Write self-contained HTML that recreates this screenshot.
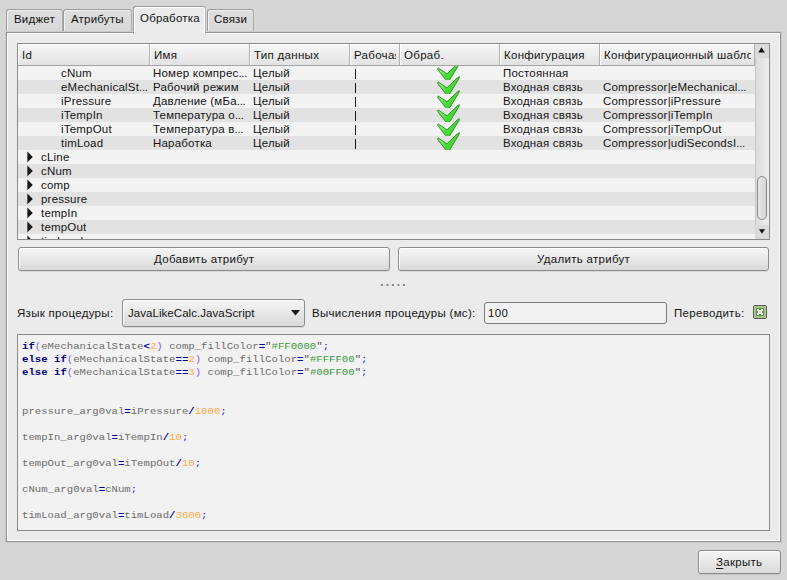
<!DOCTYPE html>
<html><head><meta charset="utf-8">
<style>
*{margin:0;padding:0;box-sizing:border-box}
html,body{width:787px;height:580px;overflow:hidden}
body{background:#d6d6d6;position:relative;font-family:"Liberation Sans",sans-serif;font-size:11.5px;letter-spacing:0.3px;color:#141414}
.a{position:absolute}
.t{position:absolute;white-space:pre;line-height:14px;height:14px;z-index:5}
.tab{position:absolute;top:9px;height:23px;border:1px solid #9c9c9c;border-right-color:#acacac;border-bottom:none;border-radius:3px 3px 0 0;background:linear-gradient(#dedede,#d8d8d8);box-shadow:inset 1px 1px 0 #f2f2f2}
.tabsel{position:absolute;top:6px;height:28px;border:1px solid #9c9c9c;border-bottom:none;border-radius:3px 3px 0 0;border-right-color:#b4b4b4;background:#ebebeb;box-shadow:inset 1px 1px 0 #fff,inset -1px 0 0 #fff;z-index:3}
.pane{position:absolute;left:6px;top:32px;width:775px;height:510px;border:1px solid #949494;background:#ebebeb;box-shadow:inset 1px 1px 0 #fff,inset -1px -1px 0 #fff,0 0 0 1px #cacaca;z-index:2}
.frame{position:absolute;left:17px;top:43px;width:753px;height:197px;border:1px solid #8a8a8a;background:#f3f3f3;overflow:hidden;z-index:4}
.hdr{position:absolute;top:0;z-index:3;height:22px;border-bottom:1px solid #a4a4a4;border-right:1px solid #b0b0b0;background:linear-gradient(#f7f7f7,#e2e2e2);box-shadow:inset 1px 1px 0 #fff}
.hdr span{position:absolute;left:4px;top:4px;white-space:pre;line-height:14px}
.row{position:absolute;left:0;width:737px;height:14px}
.r0{background:#f3f3f3}
.r1{background:#e2e2e2}
.row span{position:absolute;top:0;white-space:pre;line-height:14px;letter-spacing:0.2px}
.row span i{font-style:normal;letter-spacing:-0.3px}
.btn{position:absolute;border:1px solid #8c8c8c;border-radius:3px;background:linear-gradient(#f6f6f6,#d9d9d9);box-shadow:inset 1px 1px 0 #fff,0 1px 0 rgba(0,0,0,0.08)}
.code{position:absolute;left:22px;top:340.3px;transform:scaleY(0.9);transform-origin:0 0;font-family:"Liberation Mono",monospace;font-size:10.67px;line-height:14.444px;white-space:pre;color:#6c6c6c;letter-spacing:0}
.kw{color:#000080;font-weight:bold}
.op{color:#0000a0;font-weight:bold}
.pr{color:#8a5cff}
.nm{color:#ffad45}
.st{color:#3c9a3c}
.q{color:#505050}
.sc{color:#2020ff}
</style></head><body>
<div class="tab" style="left:6px;width:57px"></div>
<div class="t" style="left:14px;top:12px;letter-spacing:0.2px">Виджет</div>
<div class="tab" style="left:63px;width:69px"></div>
<div class="t" style="left:71px;top:12px;letter-spacing:0.2px">Атрибуты</div>
<div class="tabsel" style="left:133px;width:73px"></div>
<div class="t" style="left:140px;top:11px;letter-spacing:0.2px">Обработка</div>
<div class="tab" style="left:207px;width:47px"></div>
<div class="t" style="left:214px;top:12px;letter-spacing:0.2px">Связи</div>
<div class="pane"></div>
<div class="frame">
<div class="hdr" style="left:0px;width:132px;overflow:hidden"><span style="">Id</span></div>
<div class="hdr" style="left:132px;width:100px;overflow:hidden"><span style="">Имя</span></div>
<div class="hdr" style="left:232px;width:100px;overflow:hidden"><span style="">Тип данных</span></div>
<div class="hdr" style="left:332px;width:50px;overflow:hidden"><span style="width:42px;overflow:hidden;">Рабочая</span></div>
<div class="hdr" style="left:382px;width:100px;overflow:hidden"><span style="">Обраб.</span></div>
<div class="hdr" style="left:482px;width:100px;overflow:hidden"><span style="">Конфигурация</span></div>
<div class="hdr" style="left:582px;width:155px;overflow:hidden"><span style="width:147px;overflow:hidden;">Конфигурационный шаблон</span></div>
<div class="row r0" style="top:22px"><span style="left:43px;letter-spacing:0.2px">cNum</span><span style="left:135px">Номер компрес<i>...</i></span><span style="left:235px">Целый</span><div class="a" style="left:337px;top:3px;width:1px;height:10px;background:#1a1a2a"></div><svg class="a" style="left:419px;top:-4px" width="24" height="19" viewBox="0 -4 24 19"><defs><linearGradient id="g0" x1="0" y1="0" x2="1" y2="0.6"><stop offset="0" stop-color="#7fe86c"/><stop offset="0.35" stop-color="#78ea68"/><stop offset="0.6" stop-color="#48dc36"/><stop offset="1" stop-color="#3fd22e"/></linearGradient></defs><path d="M1.1 1.9 L10.0 7.8 L20.8 -2.6 L22.3 -3.3 L22.3 -2.1 L12.9 13.6 L10.8 14.9 L8.6 13.6 L0.7 3.4 Z" fill="url(#g0)" stroke="#2a8a22" stroke-width="0.9" stroke-linejoin="round"/></svg><span style="left:485px">Постоянная</span><span style="left:585px;letter-spacing:0.2px"></span></div>
<div class="row r1" style="top:36px"><span style="left:43px;letter-spacing:0.2px">eMechanicalSt<i>...</i></span><span style="left:135px">Рабочий режим</span><span style="left:235px">Целый</span><div class="a" style="left:337px;top:3px;width:1px;height:10px;background:#1a1a2a"></div><svg class="a" style="left:419px;top:-4px" width="24" height="19" viewBox="0 -4 24 19"><defs><linearGradient id="g1" x1="0" y1="0" x2="1" y2="0.6"><stop offset="0" stop-color="#7fe86c"/><stop offset="0.35" stop-color="#78ea68"/><stop offset="0.6" stop-color="#48dc36"/><stop offset="1" stop-color="#3fd22e"/></linearGradient></defs><path d="M1.1 1.9 L10.0 7.8 L20.8 -2.6 L22.3 -3.3 L22.3 -2.1 L12.9 13.6 L10.8 14.9 L8.6 13.6 L0.7 3.4 Z" fill="url(#g1)" stroke="#2a8a22" stroke-width="0.9" stroke-linejoin="round"/></svg><span style="left:485px">Входная связь</span><span style="left:585px;letter-spacing:0.2px">Compressor|eMechanical<i>...</i></span></div>
<div class="row r0" style="top:50px"><span style="left:43px;letter-spacing:0.2px">iPressure</span><span style="left:135px">Давление (мБа<i>...</i></span><span style="left:235px">Целый</span><div class="a" style="left:337px;top:3px;width:1px;height:10px;background:#1a1a2a"></div><svg class="a" style="left:419px;top:-4px" width="24" height="19" viewBox="0 -4 24 19"><defs><linearGradient id="g2" x1="0" y1="0" x2="1" y2="0.6"><stop offset="0" stop-color="#7fe86c"/><stop offset="0.35" stop-color="#78ea68"/><stop offset="0.6" stop-color="#48dc36"/><stop offset="1" stop-color="#3fd22e"/></linearGradient></defs><path d="M1.1 1.9 L10.0 7.8 L20.8 -2.6 L22.3 -3.3 L22.3 -2.1 L12.9 13.6 L10.8 14.9 L8.6 13.6 L0.7 3.4 Z" fill="url(#g2)" stroke="#2a8a22" stroke-width="0.9" stroke-linejoin="round"/></svg><span style="left:485px">Входная связь</span><span style="left:585px;letter-spacing:0.2px">Compressor|iPressure</span></div>
<div class="row r1" style="top:64px"><span style="left:43px;letter-spacing:0.2px">iTempIn</span><span style="left:135px">Температура о<i>...</i></span><span style="left:235px">Целый</span><div class="a" style="left:337px;top:3px;width:1px;height:10px;background:#1a1a2a"></div><svg class="a" style="left:419px;top:-4px" width="24" height="19" viewBox="0 -4 24 19"><defs><linearGradient id="g3" x1="0" y1="0" x2="1" y2="0.6"><stop offset="0" stop-color="#7fe86c"/><stop offset="0.35" stop-color="#78ea68"/><stop offset="0.6" stop-color="#48dc36"/><stop offset="1" stop-color="#3fd22e"/></linearGradient></defs><path d="M1.1 1.9 L10.0 7.8 L20.8 -2.6 L22.3 -3.3 L22.3 -2.1 L12.9 13.6 L10.8 14.9 L8.6 13.6 L0.7 3.4 Z" fill="url(#g3)" stroke="#2a8a22" stroke-width="0.9" stroke-linejoin="round"/></svg><span style="left:485px">Входная связь</span><span style="left:585px;letter-spacing:0.2px">Compressor|iTempIn</span></div>
<div class="row r0" style="top:78px"><span style="left:43px;letter-spacing:0.2px">iTempOut</span><span style="left:135px">Температура в<i>...</i></span><span style="left:235px">Целый</span><div class="a" style="left:337px;top:3px;width:1px;height:10px;background:#1a1a2a"></div><svg class="a" style="left:419px;top:-4px" width="24" height="19" viewBox="0 -4 24 19"><defs><linearGradient id="g4" x1="0" y1="0" x2="1" y2="0.6"><stop offset="0" stop-color="#7fe86c"/><stop offset="0.35" stop-color="#78ea68"/><stop offset="0.6" stop-color="#48dc36"/><stop offset="1" stop-color="#3fd22e"/></linearGradient></defs><path d="M1.1 1.9 L10.0 7.8 L20.8 -2.6 L22.3 -3.3 L22.3 -2.1 L12.9 13.6 L10.8 14.9 L8.6 13.6 L0.7 3.4 Z" fill="url(#g4)" stroke="#2a8a22" stroke-width="0.9" stroke-linejoin="round"/></svg><span style="left:485px">Входная связь</span><span style="left:585px;letter-spacing:0.2px">Compressor|iTempOut</span></div>
<div class="row r1" style="top:92px"><span style="left:43px;letter-spacing:0.2px">timLoad</span><span style="left:135px">Наработка</span><span style="left:235px">Целый</span><div class="a" style="left:337px;top:3px;width:1px;height:10px;background:#1a1a2a"></div><svg class="a" style="left:419px;top:-4px" width="24" height="19" viewBox="0 -4 24 19"><defs><linearGradient id="g5" x1="0" y1="0" x2="1" y2="0.6"><stop offset="0" stop-color="#7fe86c"/><stop offset="0.35" stop-color="#78ea68"/><stop offset="0.6" stop-color="#48dc36"/><stop offset="1" stop-color="#3fd22e"/></linearGradient></defs><path d="M1.1 1.9 L10.0 7.8 L20.8 -2.6 L22.3 -3.3 L22.3 -2.1 L12.9 13.6 L10.8 14.9 L8.6 13.6 L0.7 3.4 Z" fill="url(#g5)" stroke="#2a8a22" stroke-width="0.9" stroke-linejoin="round"/></svg><span style="left:485px">Входная связь</span><span style="left:585px;letter-spacing:0.2px">Compressor|udiSecondsI<i>...</i></span></div>
<div class="row r0" style="top:106px"><svg class="a" style="left:9px;top:1px" width="7" height="12"><path d="M0.4 0.6 L5.8 5.9 L0.4 11.2Z" fill="#161616"/></svg><span style="left:23px;letter-spacing:0.2px">cLine</span></div>
<div class="row r1" style="top:120px"><svg class="a" style="left:9px;top:1px" width="7" height="12"><path d="M0.4 0.6 L5.8 5.9 L0.4 11.2Z" fill="#161616"/></svg><span style="left:23px;letter-spacing:0.2px">cNum</span></div>
<div class="row r0" style="top:134px"><svg class="a" style="left:9px;top:1px" width="7" height="12"><path d="M0.4 0.6 L5.8 5.9 L0.4 11.2Z" fill="#161616"/></svg><span style="left:23px;letter-spacing:0.2px">comp</span></div>
<div class="row r1" style="top:148px"><svg class="a" style="left:9px;top:1px" width="7" height="12"><path d="M0.4 0.6 L5.8 5.9 L0.4 11.2Z" fill="#161616"/></svg><span style="left:23px;letter-spacing:0.2px">pressure</span></div>
<div class="row r0" style="top:162px"><svg class="a" style="left:9px;top:1px" width="7" height="12"><path d="M0.4 0.6 L5.8 5.9 L0.4 11.2Z" fill="#161616"/></svg><span style="left:23px;letter-spacing:0.2px">tempIn</span></div>
<div class="row r1" style="top:176px"><svg class="a" style="left:9px;top:1px" width="7" height="12"><path d="M0.4 0.6 L5.8 5.9 L0.4 11.2Z" fill="#161616"/></svg><span style="left:23px;letter-spacing:0.2px">tempOut</span></div>
<div class="row r0" style="top:190px"><svg class="a" style="left:9px;top:1px" width="7" height="12"><path d="M0.4 0.6 L5.8 5.9 L0.4 11.2Z" fill="#161616"/></svg><span style="left:23px;letter-spacing:0.2px">timLoad</span></div>
<div class="a" style="left:737px;top:0;width:14px;height:195px;background:linear-gradient(90deg,#dcdcdc,#eeeeee);border-left:1px solid #c8c8c8"></div>
<div class="a" style="left:737px;top:0;width:14px;height:14px;background:#dadada"></div>
<svg class="a" style="left:740px;top:3px" width="8" height="7"><path d="M0.3 5.6H6.8L3.55 0.3Z" fill="#111"/></svg>
<div class="a" style="left:737px;top:181px;width:14px;height:14px;background:#dadada"></div>
<svg class="a" style="left:740px;top:185px" width="8" height="6"><path d="M0.9 0.2H7.1L4 4.7Z" fill="#111"/></svg>
<div class="a" style="left:739px;top:132px;width:10px;height:44px;border:1px solid #8a8a8a;border-radius:5px;background:linear-gradient(90deg,#e6e6e6,#d6d6d6)"></div>
</div>
<div class="btn" style="left:18px;top:247px;width:372px;height:24px;z-index:4"></div>
<div class="t" style="left:154px;top:252px;">Добавить атрибут</div>
<div class="btn" style="left:398px;top:247px;width:371px;height:24px;z-index:4"></div>
<div class="t" style="left:537px;top:252px;">Удалить атрибут</div>
<svg class="a" style="left:376px;top:280px;z-index:4" width="36" height="10"><g fill="#8a8a8a"><rect x="4.9" y="4" width="2" height="2"/><rect x="10.4" y="4" width="2" height="2"/><rect x="15.9" y="4" width="2" height="2"/><rect x="21.4" y="4" width="2" height="2"/><rect x="26.9" y="4" width="2" height="2"/></g></svg>
<div class="t" style="left:17px;top:306px;">Язык процедуры:</div>
<div class="btn" style="left:122px;top:299px;width:183px;height:28px;z-index:4"></div>
<div class="t" style="left:128px;top:306px;letter-spacing:0.05px">JavaLikeCalc.JavaScript</div>
<svg class="a" style="left:291px;top:310px;z-index:5" width="9" height="6"><path d="M0 0H9L4.5 5.5Z" fill="#1a1a1a"/></svg>
<div class="t" style="left:312px;top:306px;">Вычисления процедуры (мс):</div>
<div class="a" style="left:484px;top:302px;width:183px;height:22px;border:1px solid #7c7c7c;border-radius:3px;background:#f2f2f2;z-index:4"></div>
<div class="t" style="left:488px;top:306px;">100</div>
<div class="t" style="left:674px;top:306px;">Переводить:</div>
<div class="a" style="left:753px;top:305px;width:14px;height:14px;border:1px solid #5a5a5a;border-radius:2px;background:#a6c98a;z-index:5"></div>
<svg class="a" style="left:756px;top:308px;z-index:6" width="8" height="8"><rect width="8" height="8" fill="#5a8a45"/><path d="M1 1h2v2h-2zM5 1h2v2h-2zM1 5h2v2h-2zM5 5h2v2h-2zM2 2h4v4h-4z" fill="#fff"/><rect x="3" y="3" width="2" height="2" fill="#ececec"/></svg>
<div class="a" style="left:17px;top:334px;width:753px;height:197px;border:1px solid #8a8a8a;background:#f2f2f2;z-index:4"></div>
<div class="code" style="z-index:5"><span class="kw">if</span><span class="pr">(</span>eMechanicalState<span class="op">&lt;</span><span class="nm">2</span><span class="pr">)</span> comp_fillColor<span class="op">=</span><span class="q">"</span><span class="st">#FF0000</span><span class="q">"</span><span class="sc">;</span>
<span class="kw">else</span> <span class="kw">if</span><span class="pr">(</span>eMechanicalState<span class="op">==</span><span class="nm">2</span><span class="pr">)</span> comp_fillColor<span class="op">=</span><span class="q">"</span><span class="st">#FFFF00</span><span class="q">"</span><span class="sc">;</span>
<span class="kw">else</span> <span class="kw">if</span><span class="pr">(</span>eMechanicalState<span class="op">==</span><span class="nm">3</span><span class="pr">)</span> comp_fillColor<span class="op">=</span><span class="q">"</span><span class="st">#00FF00</span><span class="q">"</span><span class="sc">;</span>


pressure_arg0val<span class="op">=</span>iPressure<span class="op">/</span><span class="nm">1000</span><span class="sc">;</span>

tempIn_arg0val<span class="op">=</span>iTempIn<span class="op">/</span><span class="nm">10</span><span class="sc">;</span>

tempOut_arg0val<span class="op">=</span>iTempOut<span class="op">/</span><span class="nm">10</span><span class="sc">;</span>

cNum_arg0val<span class="op">=</span>cNum<span class="sc">;</span>

timLoad_arg0val<span class="op">=</span>timLoad<span class="op">/</span><span class="nm">3600</span><span class="sc">;</span></div>
<div class="btn" style="left:698px;top:550px;width:83px;height:24px"></div>
<div class="t" style="left:716px;top:555px;"><span style="text-decoration:underline;text-underline-offset:2px">З</span>акрыть</div>
</body></html>
